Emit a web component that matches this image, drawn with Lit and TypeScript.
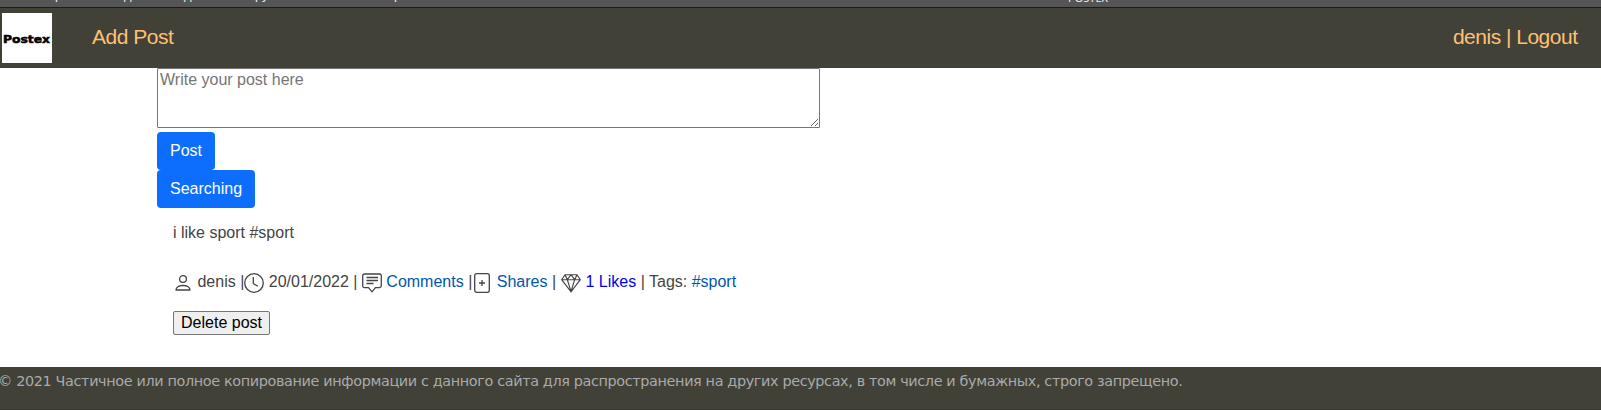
import { LitElement, html, css } from "lit";
import { customElement } from "lit/decorators.js";

@customElement("app-root")
class AppRoot extends LitElement {
  static styles = css`
    :host { display: flex; flex-direction: column; height: 410px; overflow: hidden; background: #fff; color: #444; font: 16px/24px "Liberation Sans", Arial, sans-serif; }
    * { box-sizing: border-box; }
    .strip { height: 8px; flex: none; background: #555; border-bottom: 1px solid #1c1c1a; overflow: hidden; display: grid; grid-template-columns: 55px 69px 60px 71px 139px 674px 1fr; align-items: start; color: #eee; font: 13px/14px "Liberation Sans", sans-serif; }
    .strip span { margin-top: -12px; white-space: pre; }
    .strip .title { margin-top: -9px; font: 11px/14px "Noto Sans", sans-serif; }
    header { height: 60px; flex: none; background: #414138; display: flex; align-items: flex-start; padding: 5px 23.5px 0 2px; color: #ffc073; font-size: 21px; line-height: 48px; letter-spacing: -.5px; }
    .logo { width: 50px; height: 50px; background: #fff; margin-right: 40px; flex: none; letter-spacing: 0; }
    .logo svg { display: block; }
    .user { margin-left: auto; }
    main { height: 299px; flex: none; display: flex; flex-direction: column; align-items: flex-start; padding-left: 157px; }
    textarea { display: block; width: 663px; height: 60px; margin: 0 0 4px; padding: 2px; border: 1px solid #767676; border-radius: 1px; font: 16px/18px "Liberation Sans", Arial, sans-serif; resize: both; }
    textarea::placeholder { color: #757575; }
    .btn { height: 38px; padding: 0 13px; border: 0; border-radius: 4px; background: #0d6efd; color: #fff; font: 16px/24px "Liberation Sans", Arial, sans-serif; }
    .post { padding: 13px 16px 0; }
    .meta { display: flex; align-items: center; margin: 25px 0 17px; height: 24px; white-space: pre; }
    .meta svg { width: 20px; height: 20px; fill: none; stroke: #444; stroke-width: 1.3; position: relative; top: 1px; flex: none; }
    .link { color: #0057ae; }
    .likes { color: #0000ee; }
    .gem { margin-left: .6px; }
    .del { display: block; width: 97px; height: 24px; padding: 0; border: 1px solid #767676; border-radius: 2px; background: #efefef; color: #000; font: 16px/20px "Liberation Sans", Arial, sans-serif; }
    footer { flex: 1; background: #414138; color: #aaa; font: 14.4px/22px "DejaVu Sans", Verdana, sans-serif; letter-spacing: -.365px; padding-top: 3px; white-space: nowrap; border-bottom: 1px solid #38382f; }
    .copy { display: block; margin-left: -2px; }
  `;

  render() {
    return html`
      <div class="strip"><span></span><span>р</span><span>д</span><span>д</span><span>ру</span><span>р</span><span class="title">POSTEX</span></div>
      <header>
        <div class="logo"><svg width="50" height="50"><text x="1" y="30" textLength="47" lengthAdjust="spacingAndGlyphs" font-family="DejaVu Sans" font-weight="bold" font-size="10" stroke="#000" stroke-width=".5">Postex</text></svg></div>
        <span class="add">Add Post</span>
        <span class="user">denis | Logout</span>
      </header>
      <main>
        <textarea placeholder="Write your post here"></textarea>
        <button class="btn">Post</button>
        <button class="btn">Searching</button>
        <section class="post">
          <div>i like sport #sport</div>
          <div class="meta"><svg viewBox="0 0 20 20"><circle cx="10" cy="6" r="3.4"/><path d="M3 17c0-6 14-6 14 0z" stroke-linejoin="round"/></svg><span> denis |</span><svg viewBox="0 0 20 20"><circle cx="10" cy="10" r="9.300"/><path d="M9.300 4v6.500l4.600 2.800"/></svg><span> 20/01/2022 | </span><svg viewBox="0 0 20 20"><path d="M2.500 1h15q1.800 0 1.800 1.800v10q0 1.800-1.800 1.800h-4L10 18.800l-3.500-4.200h-4Q.7 14.600.7 12.800v-10Q.7 1 2.500 1zM4.500 4.500h11.500M4.500 7.500h11.500M4.500 10.500h7"/></svg><span class="link"> Comments </span><span>|</span><svg viewBox="0 0 20 20"><rect x="2.700" y=".7" width="14.600" height="18.600" rx="2"/><path d="M10 7v6M7 10h6"/></svg><span class="link"> Shares </span><span>| </span><svg class="gem" viewBox="0 0 20 20"><path d="M4 1.700h12l3.300 5L10 18.800.7 6.700zM.7 6.700h18.600M4 1.700l2.300 5L10 18.500l3.700-11.800 2.300-5M6.300 6.700L10 1.700l3.700 5" stroke-width="1.150"/></svg><span class="likes"> 1 Likes</span><span> | Tags: </span><span class="link">#sport</span></div>
          <button class="del">Delete post</button>
        </section>
      </main>
      <footer><span class="copy">© 2021 Частичное или полное копирование информации с данного сайта для распространения на других ресурсах, в том числе и бумажных, строго запрещено.</span></footer>
    `;
  }
}
